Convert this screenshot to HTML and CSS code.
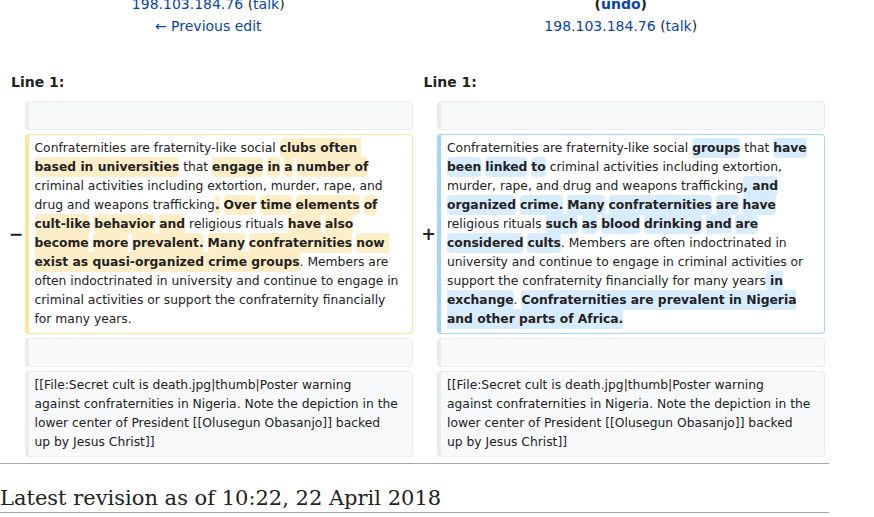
FILE: index.html
```html
<!DOCTYPE html>
<html lang="en">
<head>
<meta charset="utf-8">
<title>Confraternities: Difference between revisions</title>
<link rel="stylesheet" href="styles.css">
</head>
<body>
<div class="page">
  <div class="diff">
    <div class="hdr">
      <div><a href="#">198.103.184.76</a> <span class="tools">(<a href="#">talk</a>)</span></div>
      <div><a href="#">← Previous edit</a></div>
    </div>
    <div class="hdr">
      <div class="undo">(<a href="#">undo</a>)</div>
      <div><a href="#">198.103.184.76</a> <span class="tools">(<a href="#">talk</a>)</span></div>
    </div>

    <div class="lineno">Line 1:</div>
    <div class="lineno">Line 1:</div>

    <div class="marker"></div>
    <div class="cell ctx"><br></div>
    <div class="marker"></div>
    <div class="cell ctx"><br></div>

    <div class="marker">−</div>
    <div class="cell del">Confraternities are fraternity-like social <span class="ch">clubs often&nbsp;<br>based in universities</span> that <span class="ch">engage</span> <span class="ch">in</span> <span class="ch">a</span> <span class="ch">number of</span><br>criminal activities including extortion, murder, rape, and<br>drug and weapons trafficking<span class="ch">.</span> <span class="ch">Over</span> <span class="ch">time</span> <span class="ch">elements</span> <span class="ch">of</span><br><span class="ch">cult-like</span> <span class="ch">behavior</span> <span class="ch">and</span> religious rituals <span class="ch">have</span> <span class="ch">also</span><br><span class="ch">become</span> <span class="ch">more</span> <span class="ch">prevalent.</span> <span class="ch">Many</span> <span class="ch">confraternities</span> <span class="ch">now&nbsp;<br>exist as quasi-organized crime groups</span>. Members are<br>often indoctrinated in university and continue to engage in<br>criminal activities or support the confraternity financially<br>for many years.</div>
    <div class="marker">+</div>
    <div class="cell add">Confraternities are fraternity-like social <span class="ch">groups</span> that <span class="ch">have</span><br><span class="ch">been</span> <span class="ch">linked</span> <span class="ch">to</span> criminal activities including extortion,<br>murder, rape, and drug and weapons trafficking<span class="ch">, and</span><br><span class="ch">organized</span> <span class="ch">crime.</span> <span class="ch">Many</span> <span class="ch">confraternities</span> <span class="ch">are</span> <span class="ch">have</span><br>religious rituals <span class="ch">such</span> <span class="ch">as</span> <span class="ch">blood</span> <span class="ch">drinking</span> <span class="ch">and</span> <span class="ch">are</span><br><span class="ch">considered</span> <span class="ch">cults</span>. Members are often indoctrinated in<br>university and continue to engage in criminal activities or<br>support the confraternity financially for many years<span class="ch">&nbsp;in<br>exchange</span>. <span class="ch">Confraternities are prevalent in Nigeria<br>and other parts of Africa.</span></div>

    <div class="marker"></div>
    <div class="cell ctx"><br></div>
    <div class="marker"></div>
    <div class="cell ctx"><br></div>

    <div class="marker"></div>
    <div class="cell ctx">[[File:Secret cult is death.jpg|thumb|Poster warning<br>against confraternities in Nigeria. Note the depiction in the<br>lower center of President [[Olusegun Obasanjo]] backed<br>up by Jesus Christ]]</div>
    <div class="marker"></div>
    <div class="cell ctx">[[File:Secret cult is death.jpg|thumb|Poster warning<br>against confraternities in Nigeria. Note the depiction in the<br>lower center of President [[Olusegun Obasanjo]] backed<br>up by Jesus Christ]]</div>
  </div>
  <div class="sep"></div>
  <h2 class="rev-title">Latest revision as of 10:22, 22 April 2018</h2>
</div>
</body>
</html>
```

FILE: styles.css
```css
body {
  margin: 0;
  font-family: "DejaVu Sans", sans-serif;
  color: #222;
  background: #fff;
  overflow: hidden;
}

a {
  color: #0645ad;
  text-decoration: none;
}

.page {
  width: 829px;
  margin-top: -7px;
}

.diff {
  display: grid;
  grid-template-columns: 16.5px 1fr 16.5px 1fr;
  column-gap: 4px;
  row-gap: 4px;
  padding: 0 4px 4px;
}

.hdr {
  grid-column: span 2;
  text-align: center;
  font-size: 14px;
  line-height: 22px;
}

.tools {
  color: #222;
}

.undo {
  font-weight: bold;
}

.lineno {
  grid-column: span 2;
  font-size: 14px;
  font-weight: bold;
  line-height: 22px;
  padding: 0 7px 4px;
  margin-top: 30px;
}

.marker {
  align-self: center;
  text-align: right;
  font-size: 17.5px;
  font-weight: bold;
  line-height: 1.2;
  margin-right: -3px;
}

.cell {
  font-size: 12.32px;
  line-height: 19px;
  padding: 4px 6px;
  border: 1px solid;
  border-left-width: 4px;
  border-radius: 4px;
  min-width: 0;
  white-space: nowrap;
  overflow: hidden;
}

.ctx {
  background: #f8f9fa;
  border-color: #eaecf0;
  color: #222;
}

.del {
  border-color: #ffe49c;
}

.add {
  border-color: #a3d3ff;
}

.ch {
  font-weight: bold;
  border-radius: 0.33em;
  padding: 0.25em 0;
}

.del .ch {
  background: #feeec8;
}

.add .ch {
  background: #d8ecff;
}

.sep {
  height: 1px;
  background: #a2a9b1;
  margin-top: 2px;
}

.rev-title {
  font-family: "DejaVu Serif", serif;
  font-weight: normal;
  font-size: 21px;
  line-height: 1.3;
  margin: 21px 0 0;
  padding: 0;
  border-bottom: 1px solid #a2a9b1;
}
```
